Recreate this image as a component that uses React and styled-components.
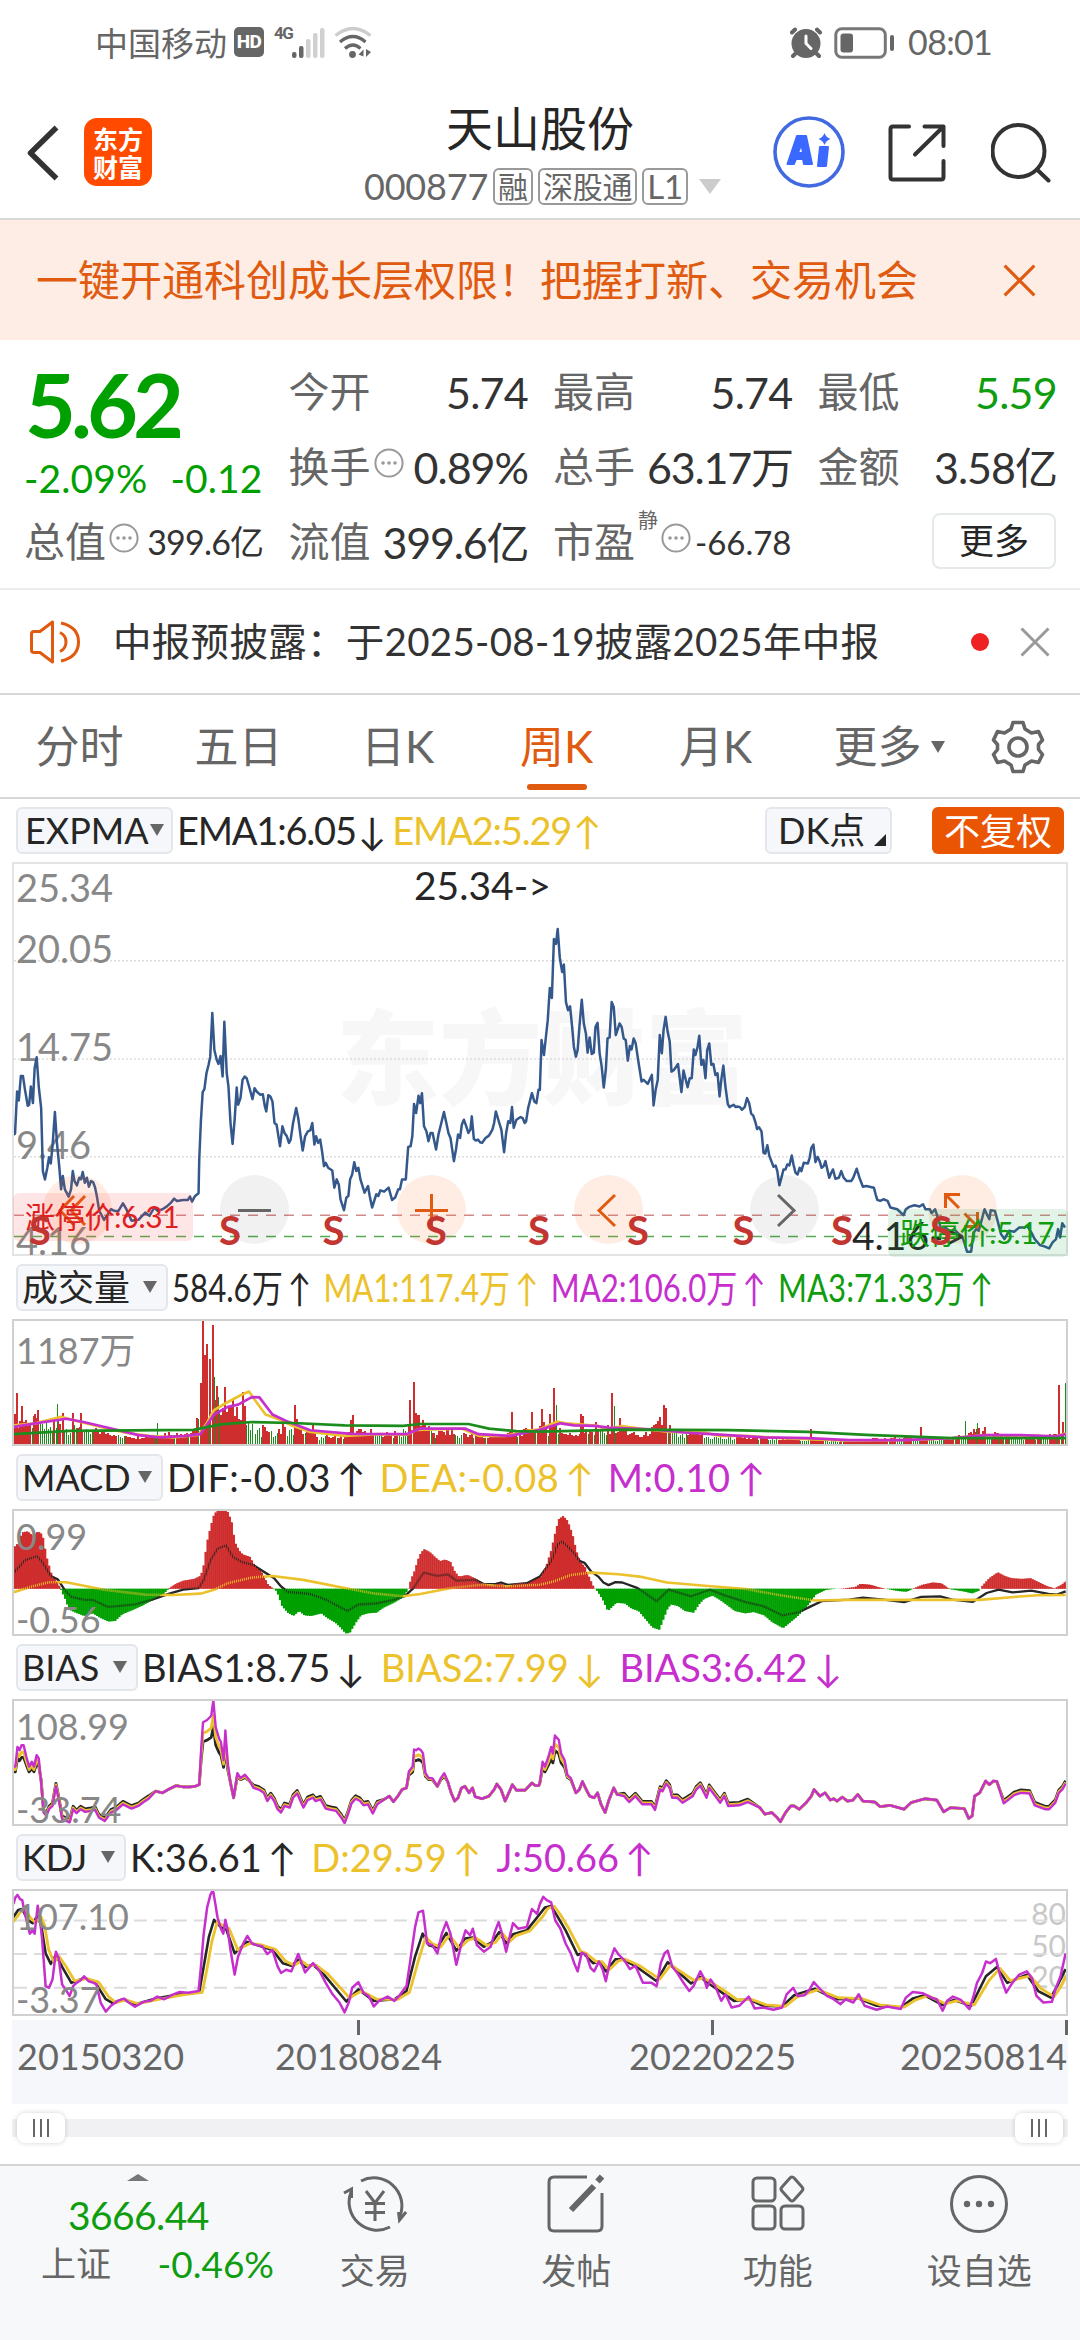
import styled, {createGlobalStyle, css} from "styled-components"

const C = {
  ink: "#262626",
  text: "#333",
  gray: "#666",
  mute: "#888",
  line: "#d8d8d8",
  green: "#0f9d0f",
  deepGreen: "#00a000",
  red: "#cf2e2e",
  orange: "#e05a10",
  brand: "#ea5504",
  yellow: "#ecc22c",
  purple: "#c62fcd",
  blue: "#34588c",
  soft: "#f6f7fa",
}

const Global = createGlobalStyle`
  * { box-sizing: border-box; }
  body {
    margin: 0;
    background: #fff;
    color: ${C.ink};
    font-family: Lato, "Noto Sans CJK SC", sans-serif;
    line-height: 1;
  }
`

/* ---------- status bar and header ---------- */

const Screen = styled.div`
  width: 1080px;
  height: 2340px;
  overflow: hidden;
  background: #fff;
`

const StatusBar = styled.div`
  height: 86px;
  padding: 0 88px 0 95px;
  display: flex;
  align-items: center;
  color: ${C.gray};
  font-size: 33px;
  svg { display: block; }
`

const Clock = styled.span`
  font-size: 34px;
  letter-spacing: -0.7px;
  margin: -2px 0 0 13px;
`

const Hd = styled.span`
  width: 30px;
  height: 30px;
  margin: -2px 0 0 7px;
  border-radius: 5px;
  background: ${C.gray};
  color: #fff;
  font: 800 19px/30px Roboto, sans-serif;
  letter-spacing: -0.5px;
  text-align: center;
`

const Net = styled.span`
  align-self: flex-start;
  margin: 25px 0 0 10px;
  width: 18px;
  font: 700 17px/17px Roboto, sans-serif;
  letter-spacing: -1.5px;
`

const Spacer = styled.span`
  flex: 1;
`

const Header = styled.header`
  height: 134px;
  display: grid;
  grid-template-columns: 330px 420px 330px;
  border-bottom: 2px solid ${C.line};
`

const HeadSide = styled.div`
  display: flex;
  align-items: flex-start;
  padding: ${p => p.$pad};
  svg { display: block; flex: none; }
`

const Logo = styled.div`
  width: 68px;
  height: 68px;
  margin: -7px 0 0 25px;
  padding-top: 6px;
  border-radius: 13px;
  background: #ff4a00;
  color: #fff;
  text-align: center;
  font: 700 25px/28px "Noto Sans CJK SC", sans-serif;
`

const HeadMid = styled.div`
  text-align: center;
  padding-top: 19px;
`

const Name = styled.h1`
  margin: 0;
  font-size: 47px;
  line-height: 46px;
  font-weight: 400;
`

const Code = styled.div`
  display: flex;
  align-items: center;
  justify-content: center;
  height: 44px;
  margin-top: 13px;
  padding-left: 5px;
  color: ${C.gray};
  font-size: 36px;
  letter-spacing: -0.2px;
`

const Tag = styled.span`
  margin-left: 5px;
  height: 37px;
  padding: 0 3px;
  border: 2px solid #999;
  border-radius: 6px;
  font-size: ${p => p.$size || 30}px;
  line-height: 32px;
`

const Tri = styled.i`
  display: inline-block;
  border: ${p => p.$w / 2}px solid transparent;
  border-bottom-width: 0;
  border-top: ${p => p.$h}px solid ${p => p.$c || C.gray};
  margin-left: ${p => p.$ml || 0}px;
`

const Promo = styled.div`
  height: 120px;
  padding: 0 44px 0 36px;
  display: flex;
  align-items: center;
  justify-content: space-between;
  background: #fdede4;
  color: ${C.orange};
  font-size: 42px;
`

/* ---------- quote ---------- */

const Quote = styled.section`
  height: 250px;
  padding: 14px 24px 0;
  display: grid;
  grid-template: repeat(3, 75px) / repeat(4, 1fr);
  column-gap: 26px;
  border-bottom: 2px solid #ececec;
`

const PriceBox = styled.div`
  grid-row: span 2;
  color: ${C.deepGreen};
`

const Price = styled.div`
  margin: 5px 0 0 1px;
  height: 90px;
  font-size: 88px;
  font-weight: 700;
  line-height: 90px;
  letter-spacing: -5px;
`

const Change = styled.div`
  display: flex;
  justify-content: space-between;
  margin-top: 9px;
  font-size: 39px;
  letter-spacing: 0.1px;
  line-height: 40px;
`

const Cell = styled.div`
  display: flex;
  align-items: center;
  justify-content: space-between;
  color: ${C.gray};
  font-size: 41px;
  white-space: nowrap;
`

const Label = styled.span`
  display: flex;
  align-items: center;
`

const Value = styled.span`
  color: ${p => p.$c || C.text};
  font-size: ${p => p.$size || 43}px;
  letter-spacing: ${p => p.$ls || 0}px;
  margin-right: ${p => p.$ls || 0}px;
  padding-top: 1px;
`

const Sup = styled.sup`
  font-size: 20px;
  align-self: flex-start;
  margin: -11px 0 0 3px;
`

const MoreButton = styled.button`
  width: 124px;
  height: 56px;
  margin: -2px 0 0 auto;
  padding: 0;
  border: 2px solid #e5e9ea;
  border-radius: 8px;
  background: #fff;
  color: ${C.ink};
  font: inherit;
  font-size: 35px;
`

const Notice = styled.div`
  height: 105px;
  padding: 0 30px;
  display: flex;
  align-items: center;
  border-bottom: 2px solid ${C.line};
  color: ${C.text};
  font-size: 38.5px;
  letter-spacing: 0.3px;
  white-space: nowrap;
  span { margin-left: 32px; flex: 1; }
`

const Dot = styled.i`
  width: 18px;
  height: 18px;
  margin-right: 31px;
  border-radius: 50%;
  background: #ee2222;
`

/* ---------- period tabs ---------- */

const Tabs = styled.nav`
  height: 104px;
  padding-right: 35px;
  display: flex;
  border-bottom: 2px solid ${C.line};
  color: ${C.gray};
  font-size: 44px;
`

const Tab = styled.div`
  width: ${p => p.$w || 159}px;
  display: flex;
  flex-direction: column;
  align-items: center;
  justify-content: flex-end;
  gap: 11px;
  padding-bottom: 7px;
  ${p => p.$on && css`color: ${C.orange};`}
  &::after {
    content: "";
    width: 60px;
    height: 6px;
    border-radius: 3px;
    background: ${p => (p.$on ? C.orange : "transparent")};
  }
  span { line-height: 54px; white-space: nowrap; }
  i { vertical-align: 10px; }
`

const GearWrap = styled.div`
  margin: 25px 0 0 auto;
`

/* ---------- indicator panes ---------- */

const Bar = styled.div`
  height: 63px;
  padding: 0 16px;
  display: flex;
  align-items: center;
  font-size: 38px;
  white-space: nowrap;
`

const Chip = styled.span`
  height: 47px;
  width: ${p => p.$w}px;
  flex: none;
  display: flex;
  align-items: center;
  justify-content: space-between;
  padding: ${p => p.$pad || "0 9px 1px 4px"};
  border: 2px solid #e3e6ea;
  border-radius: 6px;
  background: ${C.soft};
  font-size: 36px;
`

const Fuquan = styled(Chip)`
  justify-content: center;
  margin-left: 40px;
  padding: 0;
  border: 0;
  background: ${C.brand};
  color: #fff;
`

const Corner = styled.i`
  align-self: flex-end;
  margin-bottom: 5px;
  border-left: 12px solid transparent;
  border-bottom: 12px solid ${C.ink};
`

const Readings = styled.div`
  display: flex;
  gap: ${p => p.$gap || 10}px;
  margin: -2px 0 0 4px;
  letter-spacing: ${p => p.$ls || 0}px;
  transform: scaleX(${p => p.$squeeze || 1});
  transform-origin: left;
`

const Reading = styled.span`
  color: ${p => p.$c || C.ink};
`

const Arrow = styled.span`
  margin-left: ${p => p.$ml}px;
  letter-spacing: 0;
`

const Plot = styled.div`
  position: relative;
  width: 1056px;
  height: ${p => p.$h || 127}px;
  margin-left: 12px;
  border: 2px solid #d0d0d0;
  ${p => p.$h && css`border-color: #e4e4e4;`}
  > svg {
    position: absolute;
    inset: 0;
    width: 100%;
    height: 100%;
    display: block;
  }
  path, polyline { fill: none; vector-effect: non-scaling-stroke; }
`

const Mark = styled.span`
  position: absolute;
  left: ${p => p.$x}px;
  top: ${p => p.$y - 1}px;
  transform: translateY(-50%);
  color: ${p => p.$c || C.mute};
  font-size: ${p => p.$size || 36}px;
  font-weight: ${p => p.$weight || 400};
  white-space: nowrap;
`

const Watermark = styled(Mark)`
  font-weight: 900;
  font-size: 103px;
  color: #f7f7f7;
`

const Limit = styled.span`
  position: absolute;
  left: ${p => p.$x}px;
  top: ${p => p.$y}px;
  width: 180px;
  height: 48px;
  padding-left: 12px;
  border-radius: 6px;
  background: ${p => p.$bg};
  color: ${p => p.$c};
  font-size: 30px;
  line-height: 46px;
  letter-spacing: -0.3px;
  white-space: nowrap;
`

const RoundButton = styled.button`
  position: absolute;
  left: ${p => p.$x - 48}px;
  top: 311px;
  width: 69px;
  height: 69px;
  padding: 0;
  border: 0;
  border-radius: 50%;
  background: ${p => (p.$gray ? "rgba(0,0,0,.055)" : "rgba(255,110,30,.12)")};
  color: ${p => (p.$gray ? C.gray : C.orange)};
  svg { display: block; fill: none; stroke: currentColor; stroke-width: 3; }
`

const Levels = styled.div`
  position: absolute;
  right: 0;
  top: 7px;
  color: #c8c8c8;
  font-size: 30px;
  line-height: 31.5px;
`

const Axis = styled.div`
  height: 84px;
  margin: 4px 12px 0;
  padding: 18px 0 0 5px;
  display: grid;
  grid-template-columns: 258px 354px 271px 1fr;
  background: ${C.soft};
  color: ${C.gray};
  font-size: 36px;
  background-image: linear-gradient(${C.gray}, ${C.gray}), linear-gradient(${C.gray}, ${C.gray}), linear-gradient(${C.gray}, ${C.gray});
  background-size: 3px 15px;
  background-repeat: no-repeat;
  background-position: 345px 0, 699px 0, 1053px 0;
`

const Slider = styled.div`
  height: 60px;
  padding: 9px 12px 0;
`

const Track = styled.div`
  height: 30px;
  padding: 0 5px;
  display: flex;
  justify-content: space-between;
  background: linear-gradient(#f1f1f4, #f1f1f4) 0 6px / 100% 18px no-repeat;
`

const Handle = styled.div`
  width: 48px;
  display: flex;
  align-items: center;
  justify-content: center;
  gap: 5px;
  border-radius: 8px;
  background: #fff;
  box-shadow: 0 0 5px rgba(0, 0, 0, 0.18);
  i { width: 2px; height: 18px; background: ${C.gray}; }
`

/* ---------- bottom bar ---------- */

const Footer = styled.footer`
  height: 176px;
  display: grid;
  grid-template-columns: 274px repeat(4, 1fr);
  border-top: 2px solid #d4d4d4;
  background: #f6f8fa;
  color: ${C.gray};
`

const IndexBox = styled.div`
  padding-top: 8px;
`

const Up = styled.i`
  display: block;
  width: 0;
  margin-left: 127px;
  border: 11px solid transparent;
  border-top: 0;
  border-bottom: 7px solid #777;
`

const IndexValue = styled.div`
  margin: 15px 0 0 68px;
  color: ${C.green};
  font-size: 39px;
  line-height: 38px;
  letter-spacing: -0.6px;
`

const IndexRow = styled.div`
  display: flex;
  justify-content: space-between;
  align-items: center;
  padding: 0 0 0 41px;
  margin-top: 7px;
  height: 44px;
  font-size: 35px;
  b { color: ${C.green}; font-weight: 400; font-size: 37px; }
`

const NavItem = styled.div`
  display: flex;
  flex-direction: column;
  align-items: center;
  padding-top: 8px;
  font-size: 35px;
  svg {
    width: 64px;
    height: 60px;
    margin-bottom: 19px;
    fill: none;
    stroke: ${C.gray};
    stroke-width: 3;
  }
`

/* ---------- series ---------- */

// each series is sampled in two runs, the second one starts at HALF
const HALF = 1568
const LEFT = 38
const SPAN = 3061

const parse = s => s.trim().split(/\s+/).map(p => p.split(",").map(Number))
const series = (a, b) => [...parse(a), ...parse(b).map(([x, y]) => [x + HALF, y])]
const str = pts => pts.map(p => p.join(",")).join(" ")

const at = (pts, x) => {
  const i = pts.findIndex(p => p[0] >= x)
  if (i < 0) return pts[pts.length - 1][1]
  if (i === 0) return pts[0][1]
  const [x0, y0] = pts[i - 1]
  const [x1, y1] = pts[i]
  return y0 + ((y1 - y0) * (x - x0)) / (x1 - x0 || 1)
}

const price = series(
  `36,825 41,822 47,695 52,722 58,648 64,648 70,690 78,738 82,735 87,680 93,730 98,625 104,592 110,680 117,745 122,935 128,960 135,925 140,893 145,912 150,860 157,757 163,850 170,925 175,990 180,950 186,990 197,1012 204,990 209,935 214,965 221,978 228,955 233,960 238,938 244,970 250,955 256,982 262,965 268,968 274,985 279,1010 286,1055 300,1082 308,1070 320,1050 330,1055 342,1055 355,1032 365,1050 380,1085 400,1082 420,1060 432,1070 446,1045 456,1055 470,1050 482,1042 495,1030 504,1018 512,1025 530,1022 544,1022 550,1012 556,1027 565,1010 575,1002 577,900 582,780 587,697 592,688 598,640 604,615 609,590 615,458 621,570 628,600 633,612 639,588 645,650 650,485 657,640 662,680 668,790 674,853 680,780 686,683 690,735 697,715 703,660 709,650 715,655 722,680 732,718 738,685 744,695 755,705 762,703 768,740 772,755 778,706 784,710 790,725 796,790 802,795 812,860 819,800 825,820 832,830 838,850 843,840 850,790 859,745 865,775 872,830 878,873 885,830 893,815 900,812 906,790 912,855 917,830 923,850 929,840 935,880 940,920 945,910 952,925 964,933 970,985 977,960 983,975 988,1020 998,1053 1005,1015 1011,1010 1016,960 1022,945 1028,908 1034,935 1040,925 1046,960 1058,1000 1068,980 1073,1010 1080,1045 1092,1005 1098,1010 1104,993 1115,997 1128,985 1138,1022 1147,1015 1156,990 1161,990 1167,960 1178,960 1185,862 1192,860 1197,830 1202,733 1208,760 1215,708 1220,730 1225,700 1231,800 1238,815 1244,845 1250,820 1256,820 1266,870 1273,825 1279,800 1289,757 1296,790 1302,820 1308,835 1318,905 1324,870 1330,825 1336,835 1341,795 1347,780 1354,800 1360,820 1366,810 1370,770 1376,838 1382,843 1388,840 1394,848 1400,850 1410,835 1420,828 1430,810 1435,790 1440,755 1450,790 1456,810 1464,878 1470,820 1476,785 1482,790 1487,742 1492,805 1500,780 1512,772 1518,775 1524,790 1528,785 1534,745 1545,700 1552,725 1558,730 1564,690`,
  `0,690 5,540 12,585 23,480 29,383 35,413 41,235 47,250 52,205 58,290 65,335 70,312 76,425 82,450 88,438 94,500 99,560 105,590 110,570 116,490 122,418 128,490 134,520 139,578 145,532 151,582 157,578 162,500 168,488 174,580 180,620 186,683 192,630 197,535 203,532 209,425 215,440 221,525 232,490 238,500 244,535 250,540 256,602 262,558 267,568 273,535 279,550 286,600 296,665 302,660 314,672 326,645 331,737 337,690 343,660 349,525 355,580 360,510 366,470 372,515 378,545 383,635 390,630 402,612 412,697 418,632 430,682 436,655 442,655 448,568 453,585 459,560 464,527 470,615 476,600 482,655 487,570 493,550 499,615 505,612 511,645 517,640 523,710 528,660 534,617 540,680 547,733 552,742 558,738 564,735 570,742 575,740 582,742 588,750 596,742 603,715 609,730 615,762 621,768 628,790 632,808 638,803 645,815 651,880 656,882 662,857 668,890 680,922 686,918 691,935 697,978 703,955 709,930 715,930 720,915 726,918 733,888 738,915 744,940 750,945 756,925 761,935 768,910 780,912 785,895 790,865 796,855 802,908 808,892 814,905 820,925 826,920 831,905 842,955 848,940 853,930 860,958 870,955 877,935 884,955 893,965 906,965 912,955 922,928 930,955 940,982 950,980 972,985 977,1005 982,1022 990,1025 1000,1020 1012,1025 1020,1045 1040,1050 1058,1068 1065,1050 1075,1043 1090,1038 1105,1042 1115,1035 1122,1050 1135,1050 1140,1062 1150,1050 1158,1075 1165,1100 1172,1120 1180,1105 1195,1120 1205,1110 1220,1125 1228,1130 1235,1150 1243,1178 1255,1178 1262,1120 1270,1110 1277,1115 1285,1085 1294,1050 1302,1068 1308,1080 1312,1053 1324,1055 1332,1085 1342,1125 1352,1140 1365,1115 1380,1118 1395,1105 1410,1105 1418,1100 1430,1120 1440,1140 1455,1158 1468,1162 1482,1168 1492,1150 1502,1140 1508,1110 1514,1135 1520,1092 1528,1105`
)

// typical bar height along the volume pane
const volBase = series(
  "36,80 100,80 200,75 260,50 340,35 400,25 480,38 570,42 577,150 620,190 640,130 700,120 740,60 800,45 850,60 900,40 960,25 1050,45 1130,35 1180,60 1230,70 1260,40 1340,40 1400,25 1480,35 1560,50",
  "0,60 50,70 70,35 100,32 160,55 230,50 300,25 360,80 400,40 600,25 900,12 1100,25 1200,18 1280,50 1330,34 1450,20 1530,60"
)

const volSpikes = [
  [41, 465], [48, 398], [60, 438], [98, 465], [107, 452], [165, 433, 1], [181, 460], [210, 462], [233, 462],
  [454, 490, 1], [571, 475], [582, 370], [588, 180], [594, 285], [600, 250], [607, 295], [616, 192],
  [622, 352, 1], [634, 412, 1], [652, 382], [686, 445], [704, 395], [710, 438], [762, 497], [820, 478],
  [855, 437], [861, 480], [908, 495], [1018, 483], [1024, 468], [1191, 420], [1203, 366], [1209, 460],
  [1215, 468], [1487, 456], [1546, 458], [1575, 447], [1598, 465], [1609, 385], [1615, 437, 1],
  [1687, 465], [1693, 470], [1731, 487], [1778, 400], [1785, 440, 1], [1801, 475], [1918, 473],
  [1929, 437], [1936, 445], [2016, 508], [2358, 510], [2678, 502], [2806, 485, 1], [2830, 508],
  [2842, 492, 1], [2864, 503], [3079, 374], [3091, 487], [3096, 370, 1],
]

const rand = n => {
  const v = Math.sin(n * 12.9898) * 43758.5453
  return v - Math.floor(v)
}

const volBars = []
for (let i = 0; LEFT + i * 5.84 < LEFT + SPAN; i++) {
  const x = LEFT + i * 5.84
  const down = rand(Math.floor(i / 4) + 7) > 0.7 || rand(i + 300) > 0.92
  const h = at(volBase, x) * (down ? 0.35 + rand(i) * 0.5 : 0.6 + rand(i) * 0.5)
  volBars.push([x, 555 - h, down ? 1 : 0])
}

const volMa = [
  [C.yellow, series(
    "36,498 100,492 175,472 220,485 300,505 360,520 430,530 500,535 575,527 600,490 620,452 655,430 700,405 722,395 745,430 770,465 810,480 850,500 900,518 1000,530 1100,525 1180,527 1210,512 1340,508 1390,530 1470,530 1530,515",
    "0,510 50,487 75,492 170,500 190,510 240,500 290,508 380,518 480,520 520,530 600,530 700,537 900,545 1100,542 1200,537 1300,528 1450,530 1490,535 1530,522"
  )],
  [C.purple, series(
    "36,503 100,492 190,478 240,488 330,510 400,528 460,535 540,530 580,525 620,465 660,442 690,435 730,412 752,413 790,465 830,485 900,513 1020,524 1180,525 1220,508 1350,508 1390,525 1480,530",
    "0,512 60,492 100,498 160,500 200,505 320,510 420,520 500,525 650,535 780,537 900,543 1050,543 1200,537 1300,528 1400,528 1500,532 1530,525"
  )],
  ["#1c8c1c", series(
    "36,525 200,515 560,512 640,495 730,488 850,491 1000,498 1170,500 1220,494 1360,494 1420,508 1500,516",
    "0,517 100,515 250,511 550,513 780,518 950,527 1200,537 1530,537"
  )],
]

const macdHist = series(
  "36,860 45,850 60,815 75,812 90,825 105,812 118,822 130,890 145,945 160,965 170,985 185,1020 195,1050 215,1060 240,1070 265,1062 285,1075 310,1087 330,1085 350,1065 380,1052 410,1038 440,1020 470,1003 487,985 510,970 530,962 560,957 577,948 585,930 597,845 608,795 618,758 630,748 655,748 668,780 678,845 690,870 700,882 722,890 732,910 755,935 775,975 790,987 800,995 815,1040 832,1060 848,1070 865,1055 880,1068 900,1070 930,1062 945,1075 970,1090 985,1105 1000,1123 1012,1122 1030,1090 1045,1068 1065,1062 1090,1060 1110,1045 1140,1030 1165,1015 1182,990 1190,960 1200,935 1215,885 1228,866 1245,875 1260,890 1275,903 1290,898 1305,905 1318,935 1330,950 1355,945 1380,957 1395,970 1430,978 1450,970 1470,982 1500,970 1530,970 1555,958",
  "0,950 15,920 30,870 42,815 52,775 65,765 78,780 92,820 103,870 115,905 128,920 140,950 155,985 165,995 180,1020 195,1055 205,1045 220,1030 245,1032 265,1048 285,1055 305,1080 325,1105 345,1112 355,1085 370,1045 380,1035 400,1040 420,1055 445,1060 460,1035 475,1018 500,1008 520,1020 540,1035 565,1055 595,1062 620,1058 650,1068 675,1090 705,1107 725,1090 750,1068 775,1040 800,1005 830,990 850,988 880,986 915,982 930,972 960,975 985,983 1010,988 1040,994 1065,996 1085,986 1110,975 1140,968 1165,970 1190,988 1230,995 1255,1001 1275,993 1285,978 1305,955 1330,937 1350,948 1370,955 1400,957 1425,955 1445,965 1475,980 1495,986 1515,975 1530,963"
)

const dif = series(
  "36,940 70,900 105,888 120,905 145,948 165,958 185,990 205,1012 240,1020 270,1022 310,1042 340,1040 390,1035 440,1020 490,1002 530,990 575,985 590,960 610,900 630,865 655,855 675,890 700,905 735,915 765,935 795,955 815,980 835,997 900,1003 945,1020 1008,1055 1040,1035 1090,1032 1140,1022 1175,1010 1200,985 1230,938 1270,948 1300,943 1325,962 1380,960 1405,973 1440,972 1455,968 1475,975 1530,970",
  "0,950 35,900 52,852 65,843 85,862 105,885 115,902 130,908 150,935 170,950 185,968 200,976 220,967 240,968 285,985 340,1025 375,990 440,1010 495,990 540,1008 600,1028 650,1040 705,1068 755,1058 790,1040 820,1025 900,1020 940,1014 1000,1020 1060,1028 1110,1012 1165,1010 1200,1020 1260,1027 1300,1000 1335,990 1375,998 1430,993 1480,1003 1505,1005 1530,995"
)

const dea = series(
  "36,998 90,980 140,967 190,967 300,990 420,1005 500,1006 580,1002 620,990 660,970 730,953 790,948 880,960 1000,985 1090,1002 1170,1010 1220,1003 1310,985 1400,975 1470,980",
  "0,975 40,965 90,945 150,938 230,943 290,950 370,968 480,978 600,988 700,1007 800,1023 900,1021 1100,1021 1280,1021 1380,1012 1450,1007 1530,1006"
)

const bias3 = series(
  "36,350 42,350 48,290 54,300 60,285 66,285 74,320 82,350 90,335 96,350 104,315 110,325 117,400 124,490 132,500 140,480 150,470 160,410 168,450 178,510 200,520 210,480 220,492 232,480 245,488 262,485 274,482 285,505 302,516 320,490 335,483 355,465 380,478 400,470 415,458 430,448 450,425 470,430 490,418 510,408 530,412 550,412 565,410 577,405 583,290 588,215 600,208 612,195 618,148 625,230 635,265 640,275 648,330 653,240 660,340 668,400 677,445 688,370 697,385 710,375 722,390 735,415 750,420 765,430 775,455 785,440 795,455 805,480 815,490 825,470 840,475 850,445 862,432 880,475 892,452 908,445 915,455 930,450 945,478 960,482 975,485 990,505 1000,522 1010,495 1020,462 1032,448 1045,455 1055,468 1068,465 1082,493 1095,465 1115,450 1130,440 1142,457 1155,440 1167,420 1180,415 1187,365 1198,350 1202,298 1208,300 1215,295 1222,300 1228,310 1235,370 1245,385 1255,385 1270,410 1280,385 1290,370 1300,395 1310,430 1320,455 1330,445 1340,415 1350,410 1362,430 1372,415 1380,442 1400,448 1420,440 1435,420 1443,403 1455,420 1467,455 1480,425 1488,405 1500,422 1525,422 1545,400 1555,408 1565,408",
  "0,400 8,335 15,350 25,320 33,290 38,310 44,255 55,268 62,310 72,330 80,375 90,385 105,430 115,420 124,395 135,420 145,440 158,445 168,430 178,465 190,490 200,455 215,415 225,435 245,440 260,458 278,440 298,465 325,465 335,482 350,420 357,425 368,402 378,415 385,445 400,445 415,460 430,450 445,440 455,420 467,408 478,430 485,445 493,415 505,432 525,460 537,440 548,470 580,468 605,458 640,475 655,495 675,490 690,505 700,518 715,490 730,470 740,470 755,480 775,460 790,440 798,420 815,440 830,430 845,452 855,448 865,455 880,443 895,455 910,453 925,435 940,455 975,458 990,472 1020,468 1060,480 1080,460 1120,448 1155,452 1175,488 1195,475 1235,478 1248,508 1258,500 1265,440 1280,430 1297,393 1308,405 1320,393 1330,395 1350,462 1365,450 1380,437 1400,430 1425,432 1440,468 1470,480 1482,480 1500,460 1510,430 1520,420 1530,402"
)

// the shorter averages swing less, and sit a touch higher late in the range
const damp = (pts, k, lift) =>
  pts.map(([x, y]) => [x, y < 400 ? 400 + (y - 400) * k : y - (x % 1100 > 700 || x < 450 ? lift : 0)])

const kdjJ = series(
  "36,760 42,740 48,732 56,745 62,748 70,790 84,850 92,840 98,850 107,765 113,800 120,870 130,1010 140,1015 150,990 160,905 168,925 178,1005 188,1020 200,1040 210,1010 220,1000 232,992 242,980 255,995 265,998 278,1005 290,1060 305,1088 320,1070 340,1055 358,1048 372,1060 390,1073 415,1058 435,1055 455,1042 475,1050 500,1036 520,1028 545,1030 575,1025 582,950 590,850 600,770 610,730 617,718 624,760 630,800 640,835 647,850 653,808 660,840 668,900 680,975 690,920 705,880 717,857 730,880 745,885 760,888 775,912 790,900 805,950 815,970 830,960 845,965 865,912 885,968 908,940 925,960 945,1000 965,1035 985,1060 1000,1090 1012,1060 1022,1015 1040,998 1055,1030 1070,1040 1085,1072 1100,1055 1125,1042 1145,1055 1160,1038 1180,1010 1190,940 1205,830 1215,785 1228,780 1240,880 1255,885 1270,910 1283,850 1296,815 1308,850 1325,945 1340,880 1352,840 1365,855 1373,835 1385,885 1405,905 1425,890 1437,845 1448,815 1458,850 1470,905 1480,860 1490,818 1505,835 1530,830 1545,775 1560,790",
  "0,760 10,738 20,748 33,755 45,810 60,835 75,880 90,910 100,940 110,965 122,908 135,915 148,955 158,965 172,935 183,960 192,995 205,930 217,895 230,915 245,930 262,958 278,948 300,1000 325,1000 340,1010 352,940 363,910 372,902 385,950 400,970 418,1000 435,1025 447,1010 458,985 467,965 477,985 486,1015 497,990 510,1010 528,1055 540,1035 558,1075 580,1070 608,1042 625,1078 650,1075 680,1082 705,1075 718,1035 737,1015 750,1040 770,1038 785,1020 797,998 812,1015 835,1040 855,1050 875,1065 890,1050 912,1060 928,1035 945,1070 980,1082 1010,1072 1050,1080 1065,1045 1085,1028 1115,1032 1140,1045 1155,1050 1172,1085 1185,1055 1202,1042 1225,1052 1250,1080 1262,1040 1272,1000 1287,970 1298,935 1310,940 1327,927 1340,980 1357,1030 1375,1000 1395,975 1417,965 1432,985 1445,1040 1465,1060 1490,1058 1500,1020 1515,980 1530,910"
)

const kdjK = series(
  "36,800 50,778 62,775 78,808 92,818 107,795 118,830 130,910 145,942 160,915 180,955 205,1000 242,985 275,1000 305,1050 325,1062 355,1050 390,1066 450,1048 520,1035 577,1028 590,950 605,860 620,808 640,830 655,835 680,910 715,875 745,885 790,900 820,940 845,948 865,930 885,952 908,945 940,975 1005,1057 1040,1020 1085,1055 1145,1050 1180,1025 1205,920 1227,850 1245,885 1270,892 1296,848 1325,902 1350,865 1372,862 1405,890 1430,875 1450,845 1470,880 1490,852 1530,840",
  "0,790 15,770 33,766 50,795 75,840 110,915 125,908 155,940 172,935 192,965 220,928 240,928 280,950 340,995 372,937 440,1002 467,982 486,998 530,1030 565,1055 608,1050 650,1070 705,1072 740,1038 800,1018 860,1050 928,1048 980,1070 1050,1075 1085,1048 1120,1038 1172,1068 1205,1052 1255,1070 1298,980 1330,952 1360,1000 1417,975 1450,1025 1487,1045 1505,1010 1530,958"
)

const lag = pts => pts.map(([x, y], i) => [x + (i ? 9 : 0), y * 0.86 + (i ? pts[i - 1][1] : y + 100) * 0.14])

/* ---------- chart pieces ---------- */

const Pane = ({top, height = 375, children}) => (
  <svg viewBox={`${LEFT} ${top} ${SPAN} ${height}`} preserveAspectRatio="none">
    {children}
  </svg>
)

const Line = ({pts, c, w = 2.5}) => (
  <polyline points={str(pts)} stroke={c} strokeWidth={w} strokeLinejoin="round" />
)

const HLine = ({y, ...rest}) => <path d={`M${LEFT} ${y}H${LEFT + SPAN}`} {...rest} />

const VolumeBar = ({bar: [x, y, down]}) => (
  <rect
    x={x - (down ? 1 : 3)}
    y={y}
    width={down ? 2.9 : 6}
    height={555 - y}
    fill={down ? "#1c8c1c" : C.red}
    shapeRendering="crispEdges"
  />
)

const Hist = ({w}) => {
  const bars = []
  for (let x = LEFT; x < LEFT + SPAN; x += 5.84) {
    const y = at(macdHist, x)
    bars.push(
      <rect key={x} x={x} y={Math.min(y, 987)} width={w} height={Math.abs(y - 987)} fill={y < 987 ? C.red : C.deepGreen} />
    )
  }
  return bars
}

const Trend = ({text, c, ml = 6}) => (
  <Reading $c={c}>
    {text.slice(0, -1)}
    <Arrow $ml={ml}>{text.slice(-1)}</Arrow>
  </Reading>
)

const Indicator = ({name, w, items, gap, ls, squeeze}) => (
  <Bar>
    <Chip $w={w}>
      {name}
      <Tri $w={15} $h={12} />
    </Chip>
    <Readings $gap={gap} $ls={ls} $squeeze={squeeze}>
      {items.map(([text, c]) => <Trend key={text} text={text} c={c} />)}
    </Readings>
  </Bar>
)

/* ---------- icons ---------- */

const InfoIcon = styled.svg`
  margin: -7px 0 0 3px;
`

const Info = () => (
  <InfoIcon width="30" height="30" viewBox="0 0 30 30">
    <circle cx="15" cy="15" r="13.6" fill="none" stroke="#999" strokeWidth="2" />
    {[9, 15, 21].map(x => <circle key={x} cx={x} cy="15" r="1.8" fill="#999" />)}
  </InfoIcon>
)

const Cross = ({size, w = 3, c = "currentColor"}) => (
  <svg width={size} height={size} viewBox="0 0 30 30">
    <path d="M1.5 1.5l27 27M28.5 1.5l-27 27" stroke={c} strokeWidth={w} />
  </svg>
)

const Signal = () => (
  <svg width="33" height="32" viewBox="0 0 33 32">
    <g fill={C.gray}>
      <rect x="0" y="25" width="4.5" height="6" rx="2" />
      <rect x="7" y="19" width="4.5" height="12" rx="2" />
    </g>
    <g fill="#d0d0d0">
      <rect x="14" y="12" width="4.5" height="19" rx="2" />
      <rect x="21" y="6" width="4.5" height="25" rx="2" />
      <rect x="28" y="1" width="4.5" height="30" rx="2" />
    </g>
  </svg>
)

const WifiIcon = styled.svg`
  margin-left: 9px;
`

const Wifi = () => (
  <WifiIcon width="38" height="32" viewBox="0 0 38 32" fill="none" strokeWidth="3.2">
    <path d="M1.5 8.5Q19-5.500 36.500 8.500" stroke="#ccc" />
    <path d="M6 15Q19 4 31.500 15M11 21.500Q19 14.500 26.500 21.500" stroke={C.gray} />
    <circle cx="18.500" cy="27.500" r="3.400" fill={C.gray} />
    <path d="M24.500 27.500l5-5v7zM32 22v8l5-5z" fill={C.gray} />
  </WifiIcon>
)

const Alarm = () => (
  <svg width="34" height="32" viewBox="0 0 34 32" fill="none" stroke={C.gray} strokeWidth="4" strokeLinecap="round">
    <circle cx="17" cy="16.500" r="14.500" fill={C.gray} stroke="none" />
    <path d="M3 5.500l3-3M31 5.500l-3-3M6 27l-2 2M28 27l2 2" />
    <path d="M17 9v7.500l5 5" stroke="#fff" strokeWidth="3" />
  </svg>
)

const BatteryIcon = styled.svg`
  margin-left: 11px;
`

const Battery = () => (
  <BatteryIcon width="61" height="32" viewBox="0 0 61 32">
    <rect x="1.800" y="1.800" width="49.500" height="28.500" rx="6" fill="none" stroke="#777" strokeWidth="3" />
    <rect x="6.500" y="6.500" width="12.500" height="19" rx="3" fill={C.gray} />
    <rect x="56" y="8" width="4" height="16" rx="2" fill={C.gray} />
  </BatteryIcon>
)

const AiBadge = () => (
  <svg width="72" height="72" viewBox="0 0 72 72">
    <circle cx="36" cy="36" r="34" fill="none" stroke="#4169e1" strokeWidth="3.600" />
    <path fill="#3b68ff" fillRule="evenodd" stroke="#3b68ff" strokeWidth="2" strokeLinejoin="round" d="M24 20h9l6 28h-8l-1-5h-7l-2 5h-6.500zM28.500 28l-3.500 9h5zM47 31h8l-2 19h-8z" />
    <path fill="#3b68ff" d="M51.500 17q1.500 4.500 6 6q-4.500 1.500-6 6q-1.500-4.500-6-6q4.500-1.500 6-6z" />
  </svg>
)

const Share = () => (
  <svg width="58" height="58" viewBox="0 0 58 58" fill="none" stroke="#333" strokeWidth="4" strokeLinecap="round" strokeLinejoin="round">
    <path d="M21 2.500H5Q2.500 2.500 2.500 5V53Q2.500 55.500 5 55.500H53Q55.500 55.500 55.500 53V37M36.500 2.500H55.500V22M55 3L27 30.500" />
  </svg>
)

const Search = () => (
  <svg width="60" height="60" viewBox="0 0 60 60" fill="none" stroke="#333" strokeWidth="4" strokeLinecap="round">
    <circle cx="27.500" cy="28" r="26" />
    <path d="M46 46.500l11.500 11" />
  </svg>
)

const Back = () => (
  <svg width="32" height="56" viewBox="0 0 32 56" fill="none" stroke="#333" strokeWidth="5.500" strokeLinejoin="round">
    <path d="M29.500 2.500L3.500 28L29.500 53.500" />
  </svg>
)

const Speaker = () => (
  <svg width="51" height="44" viewBox="0 0 51 44" fill="none" stroke={C.orange} strokeWidth="3" strokeLinejoin="round">
    <path d="M22.500 2v40L10 32.500H4Q1.500 32.500 1.500 30V14Q1.500 11.500 4 11.500H10z" />
    <path d="M30 12.500q6 3 6 9.500t-6 9.500M31 3q17.500 4 17.500 19t-17.500 19" />
  </svg>
)

const Gear = () => (
  <svg width="54" height="54" viewBox="0 0 54 54" fill="none" stroke={C.gray} strokeWidth="3.600" strokeLinejoin="round">
    <path d="M22 2.500h10l2 6.500 6.500 4 7-1.500 4 8.500-4 4.500v5l4 5-4 8-7-1.500-6.500 4-2 6.500H22l-2-6.500-6.500-4-7 1.500-4-8 4-5v-5l-4-4.500 4-8.500 7 1.500 6.500-4z" />
    <circle cx="27" cy="27" r="9" />
  </svg>
)

const navItems = [
  ["交易", (
    <svg key="t" viewBox="0 0 64 60">
      <path d="M18 7A28 28 0 0 1 57 42M47 53A28 28 0 0 1 8 18M1 19l7.500-4v9M63 38l-6.500 8-1-8" />
      <path d="M23 17l9 12 9-12M22 29.500h20M22 38.500h20M32 29v18" />
    </svg>
  )],
  ["发帖", (
    <svg key="p" viewBox="0 0 64 60">
      <path d="M43 3H10Q5 3 5 8V52Q5 57 10 57H53Q58 57 58 52V19" />
      <path d="M53.500 7.500l4.500-5M50 12L27 36" strokeWidth="6" />
    </svg>
  )],
  ["功能", (
    <svg key="f" viewBox="0 0 64 60">
      <rect x="7" y="4" width="22" height="23" rx="4" />
      <rect x="7" y="32" width="22" height="23" rx="4" />
      <rect x="35" y="32" width="22" height="23" rx="4" />
      <path d="M46 3q1.500 0 3 2l7 8q2 2 0 4l-8 9q-2 2-4 0l-8-9q-2-2 0-4l8-9q1-1 2-1z" />
    </svg>
  )],
  ["设自选", (
    <svg key="s" viewBox="0 0 64 60">
      <circle cx="32" cy="30" r="27.500" />
      <g fill={C.gray} stroke="none">
        {[20, 32, 44].map(x => <circle key={x} cx={x} cy="30" r="3.200" />)}
      </g>
    </svg>
  )],
]

const controls = [
  [77, false, "M31 21L17 35.500L31 50M42 21L28 35.500L42 50"],
  [253.5, true, "M18 35.500H51"],
  [430.5, false, "M18 35.500H51M34.500 19V53"],
  [607.5, false, "M41 20L25 35.500L41 51"],
  [784, true, "M28 20L44 35.500L28 51"],
  [962, false, "M17.500 33V19.500H32M18 20L31 33M36.500 38.500L49 51M49.500 37V51.500H36"],
]

const buySell = [40, 230, 333.5, 436, 539, 638, 743.5, 842, 941]

export default function App() {
  return (
    <Screen>
      <Global />
      <StatusBar>
        中国移动
        <Hd>HD</Hd>
        <Net>4G</Net>
        <Signal />
        <Wifi />
        <Spacer />
        <Alarm />
        <Battery />
        <Clock>08:01</Clock>
      </StatusBar>

      <Header>
        <HeadSide $pad="39px 0 0 27px">
          <Back />
          <Logo>东方<br />财富</Logo>
        </HeadSide>
        <HeadMid>
          <Name>天山股份</Name>
          <Code>
            000877
            <Tag>融</Tag>
            <Tag>深股通</Tag>
            <Tag $size={33}>L1</Tag>
            <Tri $w={22} $h={15} $c="#ccc" $ml={11} />
          </Code>
        </HeadMid>
        <HeadSide $pad="30px 0 0 23px">
          <AiBadge />
          <HeadSide $pad="8px 0 0 43px"><Share /></HeadSide>
          <HeadSide $pad="7px 0 0 45px"><Search /></HeadSide>
        </HeadSide>
      </Header>

      <Promo>
        一键开通科创成长层权限！把握打新、交易机会
        <Cross size={33} w={2.8} />
      </Promo>

      <Quote>
        <PriceBox>
          <Price>5.62</Price>
          <Change><span>-2.09%</span><span>-0.12</span></Change>
        </PriceBox>
        <Cell>今开<Value $ls={-0.8}>5.74</Value></Cell>
        <Cell>最高<Value $ls={-0.8}>5.74</Value></Cell>
        <Cell>最低<Value $c={C.green} $ls={-0.8}>5.59</Value></Cell>
        <Cell><Label>换手<Info /></Label><Value $ls={-1}>0.89%</Value></Cell>
        <Cell>总手<Value $ls={-1.2}>63.17万</Value></Cell>
        <Cell>金额<Value $ls={-1}>3.58亿</Value></Cell>
        <Cell><Label>总值<Info /></Label><Value $size={34} $ls={-0.8}>399.6亿</Value></Cell>
        <Cell>流值<Value $ls={-1.2}>399.6亿</Value></Cell>
        <Cell><Label>市盈<Sup>静</Sup><Info /></Label><Value $size={33}>-66.78</Value></Cell>
        <Cell><MoreButton>更多</MoreButton></Cell>
      </Quote>

      <Notice>
        <Speaker />
        <span>中报预披露：于2025-08-19披露2025年中报</span>
        <Dot />
        <Cross size={30} w={3} c="#999" />
      </Notice>

      <Tabs>
        <Tab><span>分时</span></Tab>
        <Tab><span>五日</span></Tab>
        <Tab><span>日K</span></Tab>
        <Tab $on><span>周K</span></Tab>
        <Tab><span>月K</span></Tab>
        <Tab $w={188}><span>更多<Tri $w={14} $h={12} $ml={9} /></span></Tab>
        <GearWrap><Gear /></GearWrap>
      </Tabs>

      <Bar>
        <Chip $w={157} $pad="0 7px 1px 7px">EXPMA<Tri $w={15} $h={12} /></Chip>
        <Readings $gap={6} $ls={-1.2}>
          <Trend text="EMA1:6.05↓" ml={2} />
          <Trend text="EMA2:5.29↑" c={C.yellow} ml={2} />
        </Readings>
        <Spacer />
        <Chip $w={127} $pad="0 4px 1px 11px">DK点<Corner /></Chip>
        <Fuquan $w={132}>不复权</Fuquan>
      </Bar>

      <Plot $h={394}>
        <Watermark $x={322} $y={194}>东方财富</Watermark>
        <Pane top={9} height={1176}>
          {[301, 597, 892].map(y => <HLine key={y} y={y} stroke="#ccc" strokeDasharray="2 2" />)}
        </Pane>
        {[[25.34, 24], [20.05, 85], [14.75, 183], ["9.46", 281], ["4.16", 377]].map(([t, y]) => (
          <Mark key={y} $x={2} $y={y} $size={38}>{t}</Mark>
        ))}
        <Pane top={9} height={1176}>
          <HLine y={1068} stroke="#d08a8a" strokeDasharray="10 8" strokeWidth="1.500" />
          <HLine y={1132} stroke="#55ab55" strokeDasharray="10 8" strokeWidth="1.500" />
          <Line pts={price} c={C.blue} />
        </Pane>
        <Mark $x={400} $y={22} $size={39} $c={C.ink}>25.34-&gt;</Mark>
        <Mark $x={838} $y={372} $size={39} $c={C.ink}>4.16-&gt;</Mark>
        {controls.map(([x, gray, d]) => (
          <RoundButton key={x} $x={x} $gray={gray}>
            <svg width="69" height="69" viewBox="0 0 69 69"><path d={d} /></svg>
          </RoundButton>
        ))}
        <Limit $x={-1} $y={329} $bg="rgba(255,60,60,.13)" $c="#e02020">涨停价:6.31</Limit>
        <Limit $x={874} $y={345} $bg="rgba(20,160,60,.12)" $c={C.green}>跌停价:5.17</Limit>
        {buySell.map(x => (
          <Mark key={x} $x={x - 25} $y={367} $size={40} $weight={700} $c="#c23531">S</Mark>
        ))}
      </Plot>

      <Indicator
        name="成交量"
        w={152}
        squeeze={0.82}
        gap={15}
        items={[["584.6万↑"], ["MA1:117.4万↑", C.yellow], ["MA2:106.0万↑", C.purple], ["MA3:71.33万↑", C.green]]}
      />
      <Plot>
        <Pane top={180}>
          {volBars.map(b => <VolumeBar key={b[0]} bar={b} />)}
          {volSpikes.map(b => <VolumeBar key={b[0]} bar={b} />)}
          {volMa.map(([c, pts]) => <Line key={c} pts={pts} c={c} w={2.7} />)}
        </Pane>
        <Mark $x={2} $y={30}>1187万</Mark>
      </Plot>

      <Indicator name="MACD" w={147} gap={14} ls={0.5} items={[["DIF:-0.03↑"], ["DEA:-0.08↑", C.yellow], ["M:0.10↑", C.purple]]} />
      <Plot>
        <Pane top={750}>
          <Hist w={6.4} />
          <Line pts={dif} c={C.ink} w={2.3} />
          <Line pts={dea} c={C.yellow} w={2.6} />
          <Hist w={3.2} />
        </Pane>
        <Mark $x={2} $y={26}>0.99</Mark>
        <Mark $x={2} $y={109}>-0.56</Mark>
      </Plot>

      <Indicator name="BIAS" w={122} gap={16} items={[["BIAS1:8.75↓"], ["BIAS2:7.99↓", C.yellow], ["BIAS3:6.42↓", C.purple]]} />
      <Plot>
        <Pane top={150}>
          <Line pts={damp(bias3, 0.68, 9)} c={C.ink} w={2.8} />
          <Line pts={damp(bias3, 0.82, 4)} c={C.yellow} w={2.8} />
          <Line pts={bias3} c={C.purple} w={2.4} />
        </Pane>
        <Mark $x={2} $y={26}>108.99</Mark>
        <Mark $x={2} $y={109}>-33.74</Mark>
      </Plot>

      <Indicator name="KDJ" w={110} gap={15} items={[["K:36.61↑"], ["D:29.59↑", C.yellow], ["J:50.66↑", C.purple]]} />
      <Plot>
        <Levels>80<br />50<br />20</Levels>
        <Pane top={720}>
          {[810, 912, 1015].map(y => <HLine key={y} y={y} stroke="#dcdcdc" strokeDasharray="13 7" strokeWidth="1.800" />)}
          <Line pts={kdjK} c={C.ink} w={2.6} />
          <Line pts={lag(kdjK)} c={C.yellow} w={2.8} />
          <Line pts={kdjJ} c={C.purple} />
        </Pane>
        <Mark $x={2} $y={26}>107.10</Mark>
        <Mark $x={2} $y={109}>-3.37</Mark>
      </Plot>

      <Axis>
        <span>20150320</span>
        <span>20180824</span>
        <span>20220225</span>
        <span>20250814</span>
      </Axis>
      <Slider>
        <Track>
          <Handle><i /><i /><i /></Handle>
          <Handle><i /><i /><i /></Handle>
        </Track>
      </Slider>

      <Footer>
        <IndexBox>
          <Up />
          <IndexValue>3666.44</IndexValue>
          <IndexRow>上证<b>-0.46%</b></IndexRow>
        </IndexBox>
        {navItems.map(([label, icon]) => (
          <NavItem key={label}>{icon}{label}</NavItem>
        ))}
      </Footer>
    </Screen>
  )
}
